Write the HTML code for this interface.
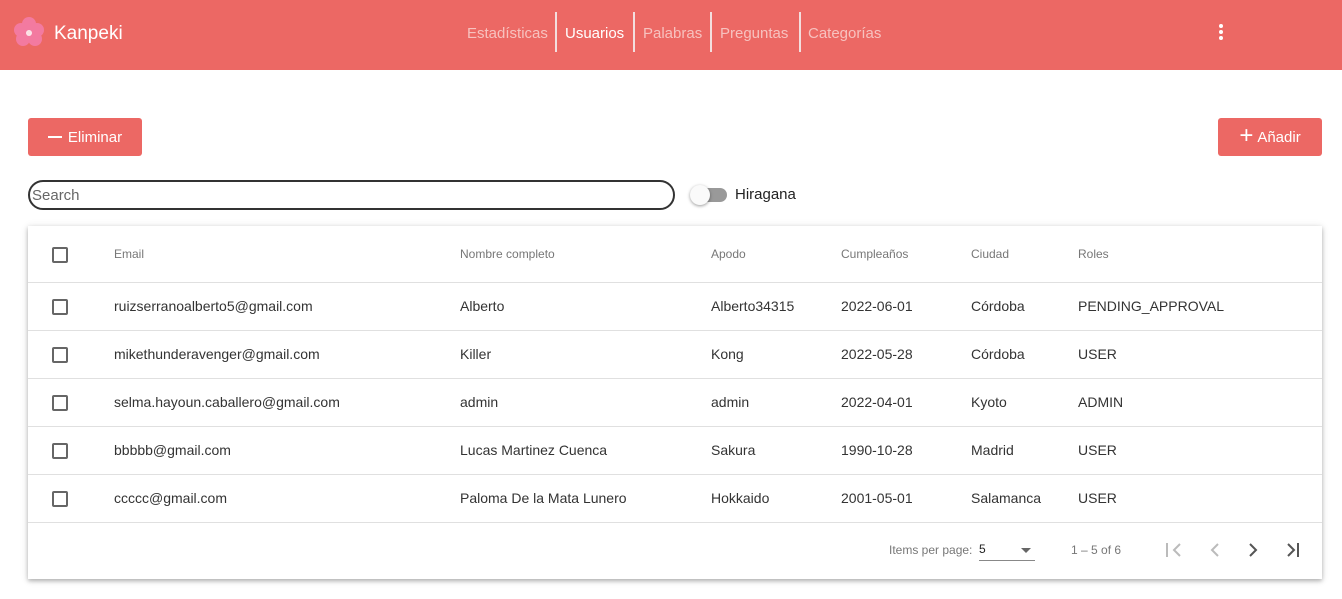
<!DOCTYPE html>
<html><head><meta charset="utf-8"><style>
*{box-sizing:border-box;margin:0;padding:0}
body{width:1342px;height:599px;background:#fff;font-family:"Liberation Sans",sans-serif;position:relative;overflow:hidden;color:#222}
.hdr{position:absolute;left:0;top:0;width:1342px;height:70px;background:#ec6864}
.abs{position:absolute}
.nav{position:absolute;top:13px;height:40px;display:flex;align-items:center;font-size:15px;color:#f7c2bf}
.btn{position:absolute;background:#ec6864;color:#fff;border-radius:3px;font-size:15px;display:flex;align-items:center;justify-content:center}
.card{position:absolute;left:28px;top:226px;width:1294px;height:353px;background:#fff;box-shadow:0 2px 4px rgba(0,0,0,.25),0 1px 8px rgba(0,0,0,.12)}
.row{position:absolute;left:0;width:1294px;height:48px;border-bottom:1px solid #e0e0e0;font-size:14px;color:#333}
.row span{position:absolute;top:15px}
.cb{position:absolute;left:24px;width:16px;height:16px;border:2px solid #666;border-radius:2px;top:16px}
.th span{font-size:12px;color:#777;top:21px}
</style></head><body>
<div class="hdr">
<svg class="abs" style="left:13px;top:16px" width="32" height="32" viewBox="0 0 32 32"><g fill="#f37aa0"><circle cx="16" cy="8" r="7"/><circle cx="8" cy="14" r="7"/><circle cx="24" cy="14" r="7"/><circle cx="10" cy="23" r="7"/><circle cx="22" cy="23" r="7"/></g><circle cx="16" cy="17" r="3" fill="#fff" opacity=".8"/></svg>
<div class="abs" style="left:54px;top:23px;color:#fff;font-size:19px">Kanpeki</div>
<div class="nav" style="left:467px"><span>Estadísticas</span></div>
<div class="abs" style="left:555px;top:12px;width:2px;height:40px;background:#f3dede"></div>
<div class="nav" style="left:565px;color:#fff"><span>Usuarios</span></div>
<div class="abs" style="left:633px;top:12px;width:2px;height:40px;background:#f3dede"></div>
<div class="nav" style="left:643px"><span>Palabras</span></div>
<div class="abs" style="left:710px;top:12px;width:2px;height:40px;background:#f3dede"></div>
<div class="nav" style="left:720px"><span>Preguntas</span></div>
<div class="abs" style="left:799px;top:12px;width:2px;height:40px;background:#f3dede"></div>
<div class="nav" style="left:808px"><span>Categorías</span></div>
<svg class="abs" style="left:1216px;top:22px" width="10" height="20"><circle cx="5" cy="4" r="2" fill="#fff"/><circle cx="5" cy="10" r="2" fill="#fff"/><circle cx="5" cy="16" r="2" fill="#fff"/></svg>
</div>
<div class="btn" style="left:28px;top:118px;width:114px;height:38px"><span style="display:inline-block;width:14px;height:2px;background:#fff;margin-right:6px"></span>Eliminar</div>
<div class="btn" style="left:1218px;top:118px;width:104px;height:38px"><span style="font-size:24px;margin-right:4px;margin-top:-3px">+</span>Añadir</div>
<div class="abs" style="left:28px;top:180px;width:647px;height:30px;border:2px solid #333;border-radius:15px;font-size:15px;color:#666;padding:5px 2px">Search</div>
<div class="abs" style="left:693px;top:188px;width:34px;height:14px;border-radius:7px;background:#999"></div>
<div class="abs" style="left:690px;top:185px;width:20px;height:20px;border-radius:50%;background:#fafafa;box-shadow:0 1px 3px rgba(0,0,0,.4)"></div>
<div class="abs" style="left:735px;top:186px;font-size:15px;color:#222">Hiragana</div>
<div class="card">
<div class="row th" style="top:0;height:57px"><div class="cb" style="top:21px"></div><span style="left:86px">Email</span><span style="left:432px">Nombre completo</span><span style="left:683px">Apodo</span><span style="left:813px">Cumpleaños</span><span style="left:943px">Ciudad</span><span style="left:1050px">Roles</span></div>
<div class="row" style="top:57px"><div class="cb"></div><span style="left:86px">ruizserranoalberto5@gmail.com</span><span style="left:432px">Alberto</span><span style="left:683px">Alberto34315</span><span style="left:813px">2022-06-01</span><span style="left:943px">Córdoba</span><span style="left:1050px">PENDING_APPROVAL</span></div>
<div class="row" style="top:105px"><div class="cb"></div><span style="left:86px">mikethunderavenger@gmail.com</span><span style="left:432px">Killer</span><span style="left:683px">Kong</span><span style="left:813px">2022-05-28</span><span style="left:943px">Córdoba</span><span style="left:1050px">USER</span></div>
<div class="row" style="top:153px"><div class="cb"></div><span style="left:86px">selma.hayoun.caballero@gmail.com</span><span style="left:432px">admin</span><span style="left:683px">admin</span><span style="left:813px">2022-04-01</span><span style="left:943px">Kyoto</span><span style="left:1050px">ADMIN</span></div>
<div class="row" style="top:201px"><div class="cb"></div><span style="left:86px">bbbbb@gmail.com</span><span style="left:432px">Lucas Martinez Cuenca</span><span style="left:683px">Sakura</span><span style="left:813px">1990-10-28</span><span style="left:943px">Madrid</span><span style="left:1050px">USER</span></div>
<div class="row" style="top:249px"><div class="cb"></div><span style="left:86px">ccccc@gmail.com</span><span style="left:432px">Paloma De la Mata Lunero</span><span style="left:683px">Hokkaido</span><span style="left:813px">2001-05-01</span><span style="left:943px">Salamanca</span><span style="left:1050px">USER</span></div>
<div class="abs" style="left:861px;top:317px;font-size:12px;color:#777">Items per page:</div>
<div class="abs" style="left:951px;top:316px;font-size:12px;color:#222">5</div>
<div class="abs" style="left:951px;top:334px;width:56px;height:1px;background:#888"></div>
<div class="abs" style="left:993px;top:322px;border-left:5px solid transparent;border-right:5px solid transparent;border-top:5px solid #666"></div>
<div class="abs" style="left:1043px;top:317px;font-size:12px;color:#777">1 – 5 of 6</div>
<svg class="abs" style="left:1136px;top:314px" width="170" height="20" fill="none" stroke-width="2"><path d="M3 3v14M16 4l-6 6 6 6" stroke="#bbb"/><path d="M54 4l-6 6 6 6" stroke="#bbb"/><path d="M86 4l6 6-6 6" stroke="#555"/><path d="M124 4l6 6-6 6M134 3v14" stroke="#555"/></svg>
</div>
</body></html>
